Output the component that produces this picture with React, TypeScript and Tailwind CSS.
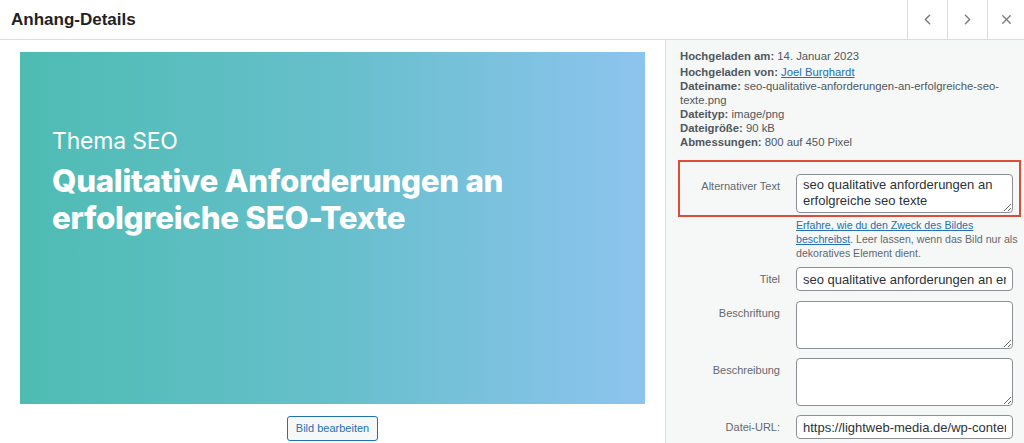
import { ChevronLeft, ChevronRight, X } from "lucide-react";

const uiFont = { fontFamily: "'Liberation Sans', Arial, sans-serif" };
const artFont = { fontFamily: "Inter, 'Noto Sans', sans-serif" };

type Detail = { label: string; value: React.ReactNode };

const details: Detail[] = [
  { label: "Hochgeladen am:", value: "14. Januar 2023" },
  {
    label: "Hochgeladen von:",
    value: <a className="text-[#2271b1] underline">Joel Burghardt</a>,
  },
  {
    label: "Dateiname:",
    value: (
      <>
        <span className="whitespace-nowrap">
          seo-qualitative-anforderungen-an-erfolgreiche-seo-
        </span>
        <br />
        texte.png
      </>
    ),
  },
  { label: "Dateityp:", value: "image/png" },
  { label: "Dateigröße:", value: "90 kB" },
  { label: "Abmessungen:", value: "800 auf 450 Pixel" },
];

const Header = () => (
  <div className="h-[40px] flex items-stretch border-b border-[#dcdcde] bg-white">
    <h1 className="flex-1 pl-[11px] flex items-center text-[17px] font-bold text-[#1d2327]">
      Anhang-Details
    </h1>
    <button className="w-10 border-l border-[#dcdcde] flex items-center justify-center text-[#787c82]">
      <ChevronLeft size={17} strokeWidth={2} />
    </button>
    <button className="w-10 border-l border-[#dcdcde] flex items-center justify-center text-[#787c82]">
      <ChevronRight size={17} strokeWidth={2} />
    </button>
    <button className="w-[37px] border-l border-[#dcdcde] flex items-center justify-center text-[#787c82]">
      <X size={15} strokeWidth={2.2} />
    </button>
  </div>
);

const Preview = () => (
  <div className="w-[665px] shrink-0 bg-white flex flex-col items-center pt-[12px]">
    <div
      style={artFont}
      className="w-[625px] h-[352px] bg-[linear-gradient(90deg,#4ebcb3,#66bfcb_50%,#8dc4ef)] pl-[32px] pt-[75px] text-white"
    >
      <p className="text-[23px] leading-[28px] font-normal tracking-[-0.2px]">
        Thema SEO
      </p>
      <p className="mt-[8px] text-[31.3px] leading-[37px] font-extrabold tracking-[-0.3px]">
        Qualitative Anforderungen an
        <br />
        erfolgreiche SEO-Texte
      </p>
    </div>
    <button className="mt-[12px] h-[25px] px-[8px] rounded-[3px] border border-[#2271b1] bg-[#f6f7f7] text-[11px] text-[#2271b1]">
      Bild bearbeiten
    </button>
  </div>
);

const FieldRow = ({
  label,
  children,
  className = "",
}: {
  label: string;
  children: React.ReactNode;
  className?: string;
}) => (
  <div className={`flex items-start ${className}`}>
    <label className="w-[101px] shrink-0 pr-px text-right text-[11px] leading-[14px] text-[#646970] pt-[5px]">
      {label}
    </label>
    <div className="ml-[15px] w-[217px] shrink-0">{children}</div>
  </div>
);

const boxClass =
  "block w-full rounded-[4px] border border-[#8c8f94] bg-white px-[6px] text-[13px] text-[#2c3338] outline-none";

const Sidebar = () => (
  <div className="flex-1 min-w-0 border-l border-[#dcdcde] bg-[#f6f7f7] pl-[14px] pr-[3px] pt-[9px]">
    <div className="text-[11.3px] leading-[14px] text-[#50575e]">
      {details.map((d, i) => (
        <div key={d.label} className={i === 0 ? "mb-[2px]" : ""}>
          <span className="font-bold text-[#50575e]">{d.label}</span>{" "}
          <span>{d.value}</span>
        </div>
      ))}
    </div>

    <div className="mt-[11px] -ml-[2px] border-2 border-[#dd4b39] pt-[12px] pb-[2px]">
      <FieldRow label="Alternativer Text">
        <textarea
          readOnly
          className={`${boxClass} h-[39px] py-[2px] leading-[16px] resize-y`}
          defaultValue="seo qualitative anforderungen an erfolgreiche seo texte"
        />
      </FieldRow>
    </div>

    <p className="ml-[116px] mt-[1px] w-[226px] text-[10.6px] leading-[14px] text-[#646970]">
      <a className="text-[#2271b1] underline">
        Erfahre, wie du den Zweck des Bildes beschreibst
      </a>
      . Leer lassen, wenn das Bild nur als dekoratives Element dient.
    </p>

    <FieldRow label="Titel" className="mt-[7px]">
      <input
        readOnly
        className={`${boxClass} h-[24px]`}
        defaultValue="seo qualitative anforderungen an erfolgreiche seo texte"
      />
    </FieldRow>

    <FieldRow label="Beschriftung" className="mt-[10px]">
      <textarea readOnly className={`${boxClass} h-[48px] resize-y`} />
    </FieldRow>

    <FieldRow label="Beschreibung" className="mt-[9px]">
      <textarea readOnly className={`${boxClass} h-[48px] resize-y`} />
    </FieldRow>

    <FieldRow label="Datei-URL:" className="mt-[9px]">
      <input
        readOnly
        className={`${boxClass} h-[24px] bg-[#f0f0f1]`}
        defaultValue="https://lightweb-media.de/wp-content/uploads/2023/01/seo-qualitative-anforderungen-an-erfolgreiche-seo-texte.png"
      />
    </FieldRow>
  </div>
);

export default function App() {
  return (
    <div style={uiFont} className="w-[1024px] h-[443px] overflow-hidden bg-white flex flex-col">
      <Header />
      <div className="flex flex-1 min-h-0">
        <Preview />
        <Sidebar />
      </div>
    </div>
  );
}
